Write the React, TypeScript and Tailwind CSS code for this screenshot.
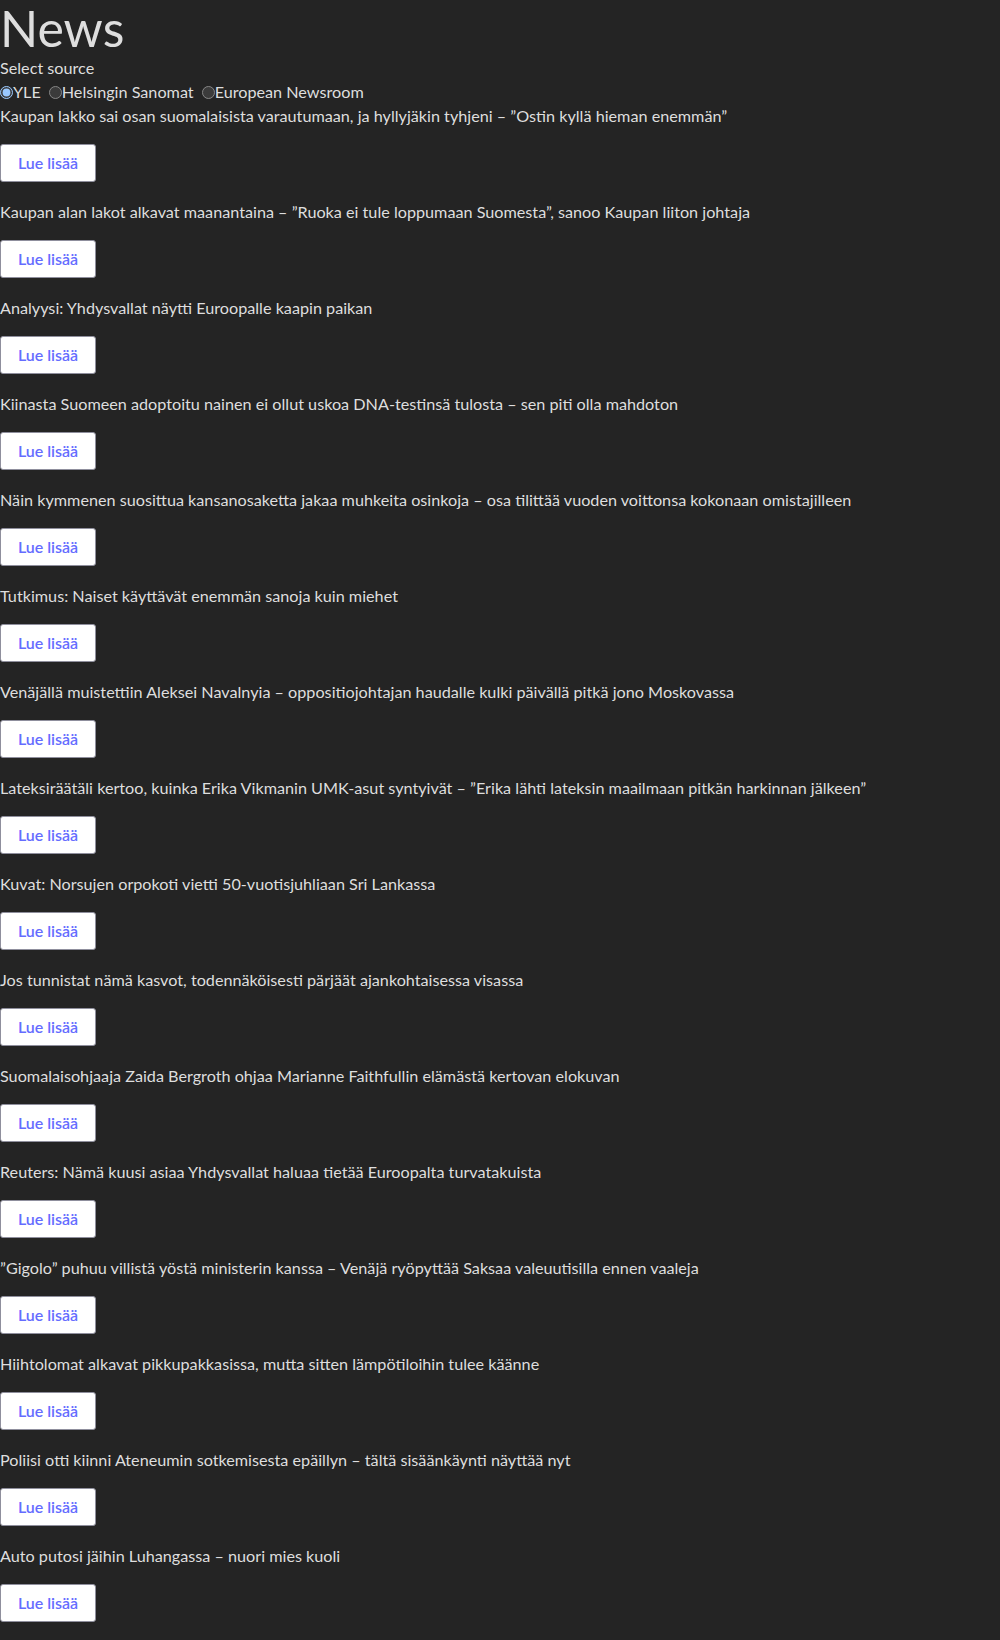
import { useState } from 'react';

const sources = ['YLE', 'Helsingin Sanomat', 'European Newsroom'];

const headlines = [
  'Kaupan lakko sai osan suomalaisista varautumaan, ja hyllyjäkin tyhjeni – ”Ostin kyllä hieman enemmän”',
  'Kaupan alan lakot alkavat maanantaina – ”Ruoka ei tule loppumaan Suomesta”, sanoo Kaupan liiton johtaja',
  'Analyysi: Yhdysvallat näytti Euroopalle kaapin paikan',
  'Kiinasta Suomeen adoptoitu nainen ei ollut uskoa DNA-testinsä tulosta – sen piti olla mahdoton',
  'Näin kymmenen suosittua kansanosaketta jakaa muhkeita osinkoja – osa tilittää vuoden voittonsa kokonaan omistajilleen',
  'Tutkimus: Naiset käyttävät enemmän sanoja kuin miehet',
  'Venäjällä muistettiin Aleksei Navalnyia – oppositiojohtajan haudalle kulki päivällä pitkä jono Moskovassa',
  'Lateksiräätäli kertoo, kuinka Erika Vikmanin UMK-asut syntyivät – ”Erika lähti lateksin maailmaan pitkän harkinnan jälkeen”',
  'Kuvat: Norsujen orpokoti vietti 50-vuotisjuhliaan Sri Lankassa',
  'Jos tunnistat nämä kasvot, todennäköisesti pärjäät ajankohtaisessa visassa',
  'Suomalaisohjaaja Zaida Bergroth ohjaa Marianne Faithfullin elämästä kertovan elokuvan',
  'Reuters: Nämä kuusi asiaa Yhdysvallat haluaa tietää Euroopalta turvatakuista',
  '”Gigolo” puhuu villistä yöstä ministerin kanssa – Venäjä ryöpyttää Saksaa valeuutisilla ennen vaaleja',
  'Hiihtolomat alkavat pikkupakkasissa, mutta sitten lämpötiloihin tulee käänne',
  'Poliisi otti kiinni Ateneumin sotkemisesta epäillyn – tältä sisäänkäynti näyttää nyt',
  'Auto putosi jäihin Luhangassa – nuori mies kuoli',
];

export default function App() {
  const [source, setSource] = useState('YLE');

  return (
    <div className="min-h-[1640px] w-full bg-[#242424] text-[#dedede] font-['Lato','Noto_Sans',sans-serif] text-[16.2px] leading-6 scheme-dark">
      <h1 className="text-[50px] leading-[56px] font-normal">News</h1>
      <div>Select source</div>
      <div className="flex h-6 items-center">
        {sources.map((s) => (
          <label key={s} className="mr-[8px] flex items-center">
            <input
              type="radio"
              name="source"
              checked={source === s}
              onChange={() => setSource(s)}
              className="m-0 h-[13px] w-[13px] scheme-dark"
            />
            <span>{s}</span>
          </label>
        ))}
      </div>
      {headlines.map((h) => (
        <div key={h} className="pb-[18px]">
          <p>{h}</p>
          <button
            type="button"
            className="mt-4 h-[38px] w-[96px] rounded-[3px] border border-[#8f8f9d] bg-white text-[16px] font-semibold text-[#646cff]"
          >
            Lue lisää
          </button>
        </div>
      ))}
    </div>
  );
}
